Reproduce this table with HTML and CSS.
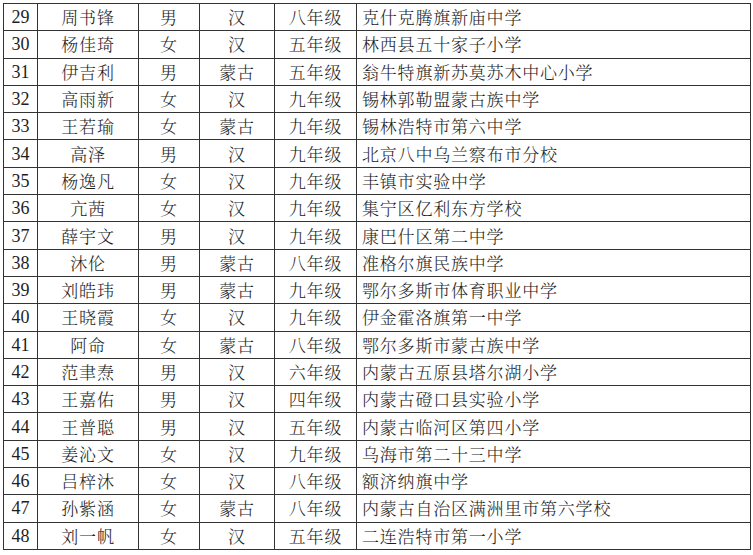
FILE: index.html
```html
<!DOCTYPE html>
<html lang="zh-CN">
<head>
<meta charset="utf-8">
<link rel="stylesheet" href="styles.css">
</head>
<body>
<table class="roster">
<colgroup>
<col class="c-no"><col class="c-name"><col class="c-sex"><col class="c-eth"><col class="c-grade"><col class="c-school">
</colgroup>
<tbody>
<tr><td class="no">29</td><td>周书锋</td><td>男</td><td>汉</td><td>八年级</td><td class="school">克什克腾旗新庙中学</td></tr>
<tr><td class="no">30</td><td>杨佳琦</td><td>女</td><td>汉</td><td>五年级</td><td class="school">林西县五十家子小学</td></tr>
<tr><td class="no">31</td><td>伊吉利</td><td>男</td><td>蒙古</td><td>五年级</td><td class="school">翁牛特旗新苏莫苏木中心小学</td></tr>
<tr><td class="no">32</td><td>高雨新</td><td>女</td><td>汉</td><td>九年级</td><td class="school">锡林郭勒盟蒙古族中学</td></tr>
<tr><td class="no">33</td><td>王若瑜</td><td>女</td><td>蒙古</td><td>九年级</td><td class="school">锡林浩特市第六中学</td></tr>
<tr><td class="no">34</td><td>高泽</td><td>男</td><td>汉</td><td>九年级</td><td class="school">北京八中乌兰察布市分校</td></tr>
<tr><td class="no">35</td><td>杨逸凡</td><td>女</td><td>汉</td><td>九年级</td><td class="school">丰镇市实验中学</td></tr>
<tr><td class="no">36</td><td>亢茜</td><td>女</td><td>汉</td><td>九年级</td><td class="school">集宁区亿利东方学校</td></tr>
<tr><td class="no">37</td><td>薛宇文</td><td>男</td><td>汉</td><td>九年级</td><td class="school">康巴什区第二中学</td></tr>
<tr><td class="no">38</td><td>沐伦</td><td>男</td><td>蒙古</td><td>八年级</td><td class="school">准格尔旗民族中学</td></tr>
<tr><td class="no">39</td><td>刘皓玮</td><td>男</td><td>蒙古</td><td>九年级</td><td class="school">鄂尔多斯市体育职业中学</td></tr>
<tr><td class="no">40</td><td>王晓霞</td><td>女</td><td>汉</td><td>九年级</td><td class="school">伊金霍洛旗第一中学</td></tr>
<tr><td class="no">41</td><td>阿命</td><td>女</td><td>蒙古</td><td>八年级</td><td class="school">鄂尔多斯市蒙古族中学</td></tr>
<tr><td class="no">42</td><td>范聿焘</td><td>男</td><td>汉</td><td>六年级</td><td class="school">内蒙古五原县塔尔湖小学</td></tr>
<tr><td class="no">43</td><td>王嘉佑</td><td>男</td><td>汉</td><td>四年级</td><td class="school">内蒙古磴口县实验小学</td></tr>
<tr><td class="no">44</td><td>王普聪</td><td>男</td><td>汉</td><td>五年级</td><td class="school">内蒙古临河区第四小学</td></tr>
<tr><td class="no">45</td><td>姜沁文</td><td>女</td><td>汉</td><td>九年级</td><td class="school">乌海市第二十三中学</td></tr>
<tr><td class="no">46</td><td>吕梓沐</td><td>女</td><td>汉</td><td>八年级</td><td class="school">额济纳旗中学</td></tr>
<tr><td class="no">47</td><td>孙紫涵</td><td>女</td><td>蒙古</td><td>八年级</td><td class="school">内蒙古自治区满洲里市第六学校</td></tr>
<tr><td class="no">48</td><td>刘一帆</td><td>女</td><td>汉</td><td>五年级</td><td class="school">二连浩特市第一小学</td></tr>
</tbody>
</table>
</body>
</html>
```
FILE: styles.css
```css
html, body {
  margin: 0;
  padding: 0;
  background: #ffffff;
}
body {
  padding: 3px 0 0 3px;
}
.roster {
  border-collapse: collapse;
  table-layout: fixed;
  width: 747px;
  font-family: "Noto Serif CJK SC", "Liberation Serif", "Noto Sans CJK SC", serif;
  color: #1e1e1e;
  font-size: 17px;
  font-weight: 300;
}
.c-no { width: 34px; }
.c-name { width: 101px; }
.c-sex { width: 61px; }
.c-eth { width: 75px; }
.c-grade { width: 82px; }
.c-school { width: 394px; }
.roster td {
  border: 1.5px solid #333333;
  height: 26.3px;
  padding: 0;
  text-align: center;
  vertical-align: middle;
  line-height: 20px;
  letter-spacing: 0.8px;
  white-space: nowrap;
  overflow: hidden;
}
.roster td.no {
  font-family: "Liberation Serif", serif;
  font-size: 18px;
  font-weight: 400;
  letter-spacing: 0;
}
.roster td.school {
  text-align: left;
  padding-left: 5px;
}
```
